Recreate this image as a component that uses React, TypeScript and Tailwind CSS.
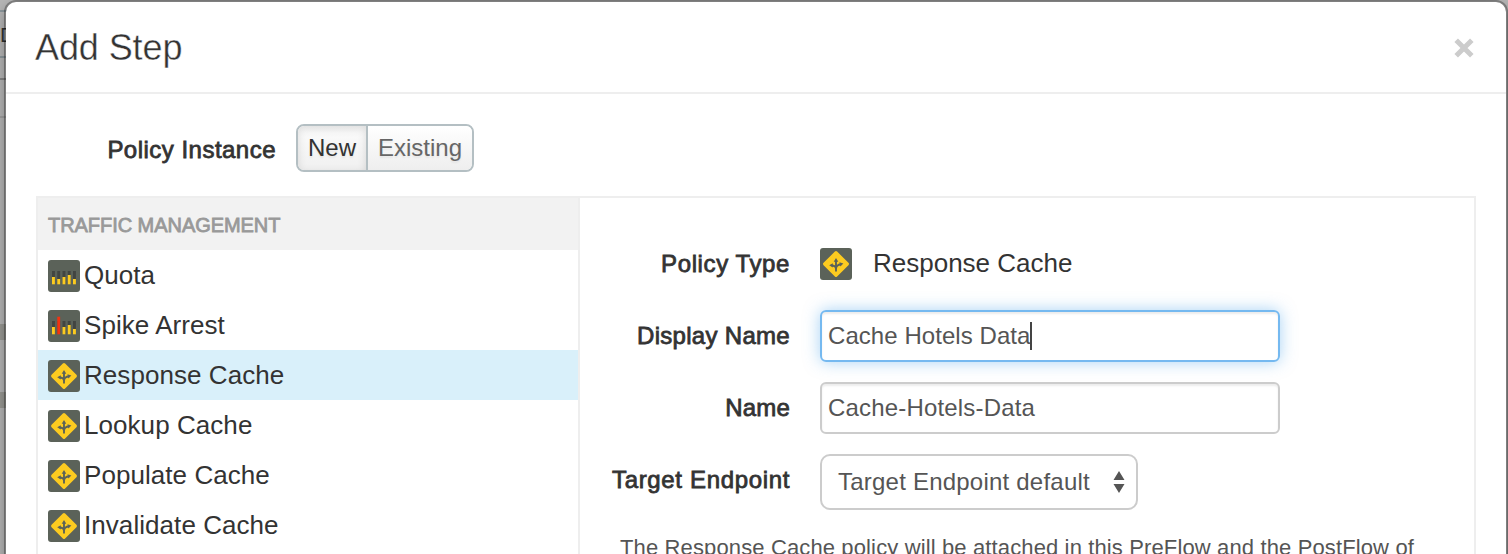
import React from "react";

function CacheIcon() {
  return (
    <svg className="block h-8 w-8 shrink-0" viewBox="0 0 32 32">
      <rect width="32" height="32" rx="3" fill="#5b6259" />
      <rect x="6.4" y="6.4" width="19.2" height="19.2" rx="1.6" transform="rotate(45 16 16)" fill="#fccb20" />
      <g fill="none" stroke="#5b6259" strokeWidth="1.9">
        <path d="M16 23.500V12" />
        <path d="M16 20.500c-.3-2.200-2-3-4.500-3" />
        <path d="M16 20.500c.2-2.800 2.200-3.800 5.200-4.200" />
      </g>
      <path d="M16 10l2.300 3.800h-4.600zM9.200 17.200l3.600-2v4.400zM23.400 15.600l-4-1.400.9 4.200z" fill="#5b6259" />
    </svg>
  );
}

function BarsIcon({ bars, spike = false }: { bars: number[]; spike?: boolean }) {
  return (
    <svg className="block h-8 w-8 shrink-0" viewBox="0 0 32 32">
      <rect width="32" height="32" rx="3" fill="#5b6259" />
      {bars.map((h, i) => {
        const x = 4 + i * 5.25;
        const red = spike && i === 1;
        return (
          <g key={i}>
            <rect x={x} y="11" width="2.9" height="13" fill="#424541" />
            <rect x={x} y={24.3 - h} width="2.9" height={h} fill={red ? "#f23311" : "#fccb20"} />
          </g>
        );
      })}
    </svg>
  );
}

const policies = [
  { name: "Quota", icon: <BarsIcon bars={[7.3, 5.3, 7.3, 9.3, 5.3]} /> },
  { name: "Spike Arrest", icon: <BarsIcon bars={[7.3, 17.6, 7.3, 9.3, 5.3]} spike /> },
  { name: "Response Cache", icon: <CacheIcon />, selected: true },
  { name: "Lookup Cache", icon: <CacheIcon /> },
  { name: "Populate Cache", icon: <CacheIcon /> },
  { name: "Invalidate Cache", icon: <CacheIcon /> },
];

function Label({ children, className = "" }: { children: React.ReactNode; className?: string }) {
  return (
    <span className={`whitespace-nowrap text-right text-[24px] leading-[28px] text-[#333] [-webkit-text-stroke:0.8px_#333] ${className}`}>
      {children}
    </span>
  );
}

export default function App() {
  return (
    <div className="relative h-[554px] w-full overflow-hidden bg-[#b6b6b6] font-['Liberation_Sans',Arial,sans-serif]">
      <div className="flex w-[30px] flex-col">
        <div className="h-[12px] border-b-2 border-[#8c979c]" />
        <div className="h-[46px] border-b-2 border-[#8c979c] pt-[12px] text-[21px] leading-[22px] text-[#333]">D</div>
        <div className="h-[22px] border-b-2 border-[#858585]" />
        <div className="h-[38px] border-b-2 border-[#a0a0a0]" />
        <div className="mt-[206px] h-[16px] bg-[#999994]" />
        <div className="mt-[52px] h-[16px] bg-[#999994]" />
      </div>

      <div className="absolute top-0 left-[4px] flex h-[620px] w-[1504px] flex-col rounded-[12px] border-2 border-black/30 bg-white bg-clip-padding shadow-[0_6px_14px_rgba(0,0,0,0.3)]">
        <header className="flex h-[92px] shrink-0 items-center justify-between border-b-2 border-[#eee] pr-[32px] pl-[29px]">
          <h1 className="mt-[2px] text-[36px] leading-[40px] tracking-[-0.1px] text-[#333] [-webkit-text-stroke:0.4px_#fff]">Add Step</h1>
          <svg className="mt-px h-[20px] w-[20px]" viewBox="0 0 20 20">
            <path d="M2.200 2.200L17.800 17.800M17.800 2.200L2.200 17.800" stroke="#ccc" strokeWidth="5" />
          </svg>
        </header>

        <div className="flex h-[102px] shrink-0 pt-[30px] pl-[101px]">
          <Label className="mt-[12px] w-[169px] tracking-[0.48px]">Policy Instance</Label>
          <div className="ml-[20px] flex h-[48px] w-[178px] overflow-hidden rounded-[8px] border-2 border-[#b4bfc3] text-[24px] leading-[44px] [text-shadow:0_2px_2px_rgba(0,0,0,0.06)]">
            <div className="w-[70px] border-r-2 border-[#b4bfc3] bg-linear-to-b from-[#fcfcfc] to-[#f0f0f0] text-center text-[#333] shadow-[inset_0_3px_8px_rgba(0,0,0,0.13)]">New</div>
            <div className="flex-1 bg-linear-to-b from-white to-[#eee] text-center text-[#666]">Existing</div>
          </div>
        </div>

        <div className="mx-[30px] flex flex-1 border-2 border-[#eee]">
          <aside className="w-[542px] shrink-0 border-r-2 border-[#eee]">
            <div className="h-[52px] bg-[#f2f2f2] pl-[10px] text-[20px] leading-[54px] tracking-[-0.05px] text-[#999] [-webkit-text-stroke:0.8px_#999]">TRAFFIC MANAGEMENT</div>
            {policies.map((p) => (
              <div key={p.name} className={`flex h-[50px] pt-[10px] pl-[10px] ${p.selected ? "bg-[#d9f0fa]" : "bg-white"}`}>
                {p.icon}
                <span className="ml-[4px] text-[26px] leading-[30px] tracking-[0.06px] text-[#333]">{p.name}</span>
              </div>
            ))}
          </aside>

          <section className="flex flex-col pt-[50px] text-[24px] text-[#555]">
            <div className="flex h-[62px]">
              <Label className="mt-[2px] w-[210px] tracking-[0.6px]">Policy Type</Label>
              <div className="ml-[30px]"><CacheIcon /></div>
              <span className="ml-[21px] text-[26px] leading-[30px] text-[#333]">Response Cache</span>
            </div>
            <div className="flex h-[72px]">
              <Label className="mt-[12px] w-[210px] tracking-[0.3px]">Display Name</Label>
              <div className="ml-[30px] flex h-[52px] w-[460px] items-center rounded-[6px] border-2 border-[#75b9f0] pl-[6px] leading-[28px] tracking-[0.06px] shadow-[0_0_16px_rgba(82,168,236,0.5),inset_0_2px_2px_rgba(0,0,0,0.075)]">
                Cache Hotels Data
                <span className="h-[28px] w-[2px] bg-[#444]" />
              </div>
            </div>
            <div className="flex h-[72px]">
              <Label className="mt-[12px] w-[210px] tracking-[0.2px]">Name</Label>
              <div className="ml-[30px] flex h-[52px] w-[460px] items-center rounded-[6px] border-2 border-[#ccc] pl-[6px] leading-[28px] tracking-[0.18px] shadow-[inset_0_2px_2px_rgba(0,0,0,0.075)]">
                Cache-Hotels-Data
              </div>
            </div>
            <div className="flex h-[80px]">
              <Label className="mt-[12px] w-[210px] tracking-[0.66px]">Target Endpoint</Label>
              <div className="ml-[30px] flex h-[56px] w-[318px] items-center justify-between rounded-[10px] border-2 border-[#ccc] pr-[11px] pl-[16px] leading-[28px] tracking-[0.22px]">
                Target Endpoint default
                <svg className="h-[22px] w-[12px]" viewBox="0 0 12 22">
                  <path d="M6 0l5.500 9h-11zM6 22l5.500-9h-11z" fill="#555" />
                </svg>
              </div>
            </div>
            <p className="ml-[40px] text-[22px] leading-[28px] tracking-[0.13px] whitespace-nowrap">
              The Response Cache policy will be attached in this PreFlow and the PostFlow of
            </p>
          </section>
        </div>
      </div>
    </div>
  );
}
